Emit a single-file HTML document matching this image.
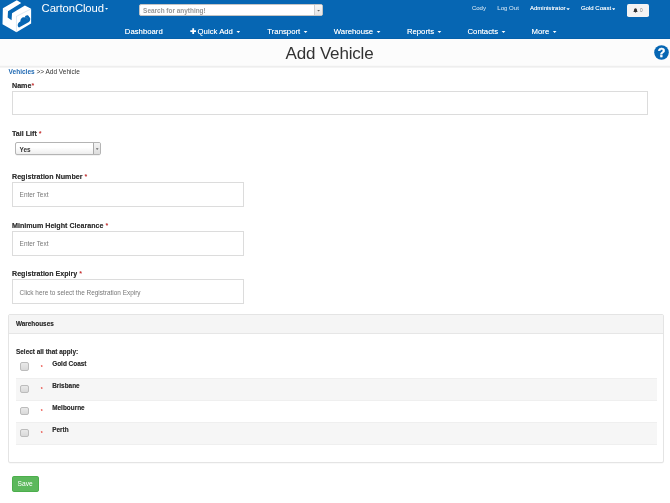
<!DOCTYPE html>
<html><head><meta charset="utf-8"><title>Add Vehicle</title>
<style>
*{box-sizing:border-box;margin:0;padding:0}
html,body{width:670px;height:503px;overflow:hidden;background:#fff;font-family:"Liberation Sans",sans-serif;color:#333}
.abs{position:absolute}
div{line-height:normal}
#hdr{position:absolute;left:0;top:0;width:670px;height:39px;background:#0666b3;box-shadow:inset 0 -1px 0 #0560aa}
#hdr .t{position:absolute;color:#fff;white-space:nowrap}
.brand{left:41.6px;top:2.1px;font-size:11.3px;letter-spacing:-0.1px}
.nav{font-size:7.75px;top:26.9px}
.top{font-size:6.05px;top:4.7px}
.caret{display:inline-block;width:4.2px;height:2.1px;background:#fff;clip-path:polygon(0 0,100% 0,50% 100%);vertical-align:middle;margin-left:3.3px}
.top .caret{width:3.5px;height:1.9px;margin-left:0.8px;vertical-align:-0.5px}
#search{position:absolute;left:138.5px;top:4.1px;width:184.8px;height:12.3px;background:#fff;border:0.6px solid #c4c4c4;border-radius:2px;overflow:hidden}
#search span{position:absolute;left:3.6px;top:1.8px;font-size:6.45px;font-weight:bold;color:#979797;white-space:nowrap}
#search .dd{position:absolute;right:0;top:0;width:8.4px;height:11px;background:linear-gradient(#f6f6f6,#e4e4e4);border-left:0.6px solid #cfcfcf}
.dd:after{content:"";position:absolute;left:2.3px;top:4.8px;width:2.8px;height:1.7px;background:#666;clip-path:polygon(0 0,100% 0,50% 100%)}
#title{position:absolute;left:285.6px;top:43.8px;font-size:17px;letter-spacing:-0.17px;color:#333;white-space:nowrap}
#tline{position:absolute;left:0;top:65px;width:670px;height:3px;background:linear-gradient(#f9f9f9 0,#f9f9f9 33%,#eeeeee 33%,#eeeeee 67%,#f4f4f4 67%)}
.lbl{position:absolute;left:12px;font-size:7.13px;font-weight:bold;color:#333;white-space:nowrap}
.lbl i{color:#e02020;font-style:normal;font-weight:normal}
.inp{position:absolute;left:11.5px;border:0.7px solid #dcdcdc;background:#fff}
.inp span{position:absolute;left:7.1px;font-size:6.45px;color:#777;white-space:nowrap}
.row{position:absolute;left:16px;width:640.5px;height:22.25px}
.row .cb{position:absolute;left:4.4px;top:6.5px;width:8.2px;height:8.4px;border:0.7px solid #bcbcbc;border-radius:2px;background:linear-gradient(#e9e9e9,#d9d9d9)}
.row .st{position:absolute;left:24.8px;top:9px;font-size:5px;color:#e8433a;line-height:4px;font-weight:bold}
.row .nm{position:absolute;left:36.2px;top:3.8px;font-size:6.43px;font-weight:bold;color:#333;white-space:nowrap}
.alt{background:#f6f6f6}
.ln{position:absolute;left:16px;width:640.5px;height:1px;background:#efefef}
.lbl,.row .nm,.bd{text-shadow:0 0 0.45px rgba(40,40,40,.55)}
.top,.nav{text-shadow:0 0 0.4px rgba(255,255,255,.6)}
#wrap{position:absolute;left:0;top:0;width:670px;height:503px;will-change:transform}
</style></head><body><div id="wrap">
<div id="hdr">
 <svg class="abs" style="left:0;top:0" width="40" height="36" viewBox="0 0 559 503">
  <path d="M235 5 L297 42 L112 157 L107 245 L162 283 L168 186 L348 78 L435 122 L435 330 L230 450 L35 340 L40 115 Z" fill="#fff"/>
  <path d="M230 228 L435 124 M230 228 L230 450" stroke="#0666b3" stroke-width="5" fill="none" opacity="0.4"/>
  <path d="M266 386 C236 372 246 314 284 302 C282 254 322 230 346 246 C352 208 398 200 408 238 C432 252 424 296 404 306 Z" fill="#0666b3"/>
  <path d="M352 246 C366 240 380 252 382 270" stroke="#fff" stroke-width="5" fill="none" opacity="0.4"/>
  <path d="M48 118 L110 155" stroke="#0666b3" stroke-width="4" fill="none" opacity="0.3"/>
 </svg>
 <div class="t brand">CartonCloud<span class="caret" style="margin-left:1.2px;width:3px;height:1.7px;vertical-align:2.4px"></span></div>
 <div id="search"><span>Search for anything!</span><div class="dd"></div></div>
 <div class="t top" style="left:471.9px;opacity:.72">Cody</div>
 <div class="t top" style="left:497.3px;opacity:.72">Log Out</div>
 <div class="t top" style="left:529.9px">Administrator<span class="caret"></span></div>
 <div class="t top" style="left:580.9px">Gold Coast<span class="caret"></span></div>
 <div class="abs" style="left:626.9px;top:4.1px;width:22.2px;height:12.7px;background:#f3f3f3;border-radius:1.8px"></div>
 <svg class="abs" style="left:632.5px;top:8px" width="5" height="5" viewBox="0 0 10 10"><path d="M5 0.5 C7.2 0.5 8 2.5 8 4.5 C8 6.2 8.6 7 9.5 7.8 L0.5 7.8 C1.4 7 2 6.2 2 4.5 C2 2.5 2.8 0.5 5 0.5 Z M3.8 8.4 L6.2 8.4 C6.2 9.2 5.7 9.7 5 9.7 C4.3 9.7 3.8 9.2 3.8 8.4 Z" fill="#333"/></svg>
 <div class="abs" style="left:640px;top:7.8px;font-size:4.7px;color:#7c7c7c">0</div>
 <div class="t nav" style="left:124.8px">Dashboard</div>
 <svg class="abs" style="left:189.6px;top:28.3px" width="6.4" height="6.4" viewBox="0 0 10 10"><path d="M3.6 0.5 H6.4 V3.6 H9.5 V6.4 H6.4 V9.5 H3.6 V6.4 H0.5 V3.6 H3.6 Z" fill="#fff"/></svg>
 <div class="t nav" style="left:197.6px">Quick Add<span class="caret"></span></div>
 <div class="t nav" style="left:267.3px">Transport<span class="caret"></span></div>
 <div class="t nav" style="left:333.8px">Warehouse<span class="caret"></span></div>
 <div class="t nav" style="left:406.9px">Reports<span class="caret"></span></div>
 <div class="t nav" style="left:467.5px">Contacts<span class="caret"></span></div>
 <div class="t nav" style="left:531.6px">More<span class="caret"></span></div>
</div>
<div class="abs" style="left:0;top:39px;width:670px;height:26px;background:#fcfcfc"></div>
<div id="title">Add Vehicle</div>
<div id="tline"></div>
<svg class="abs" style="left:654.1px;top:45px" width="15" height="15" viewBox="0 0 15 15"><circle cx="7.5" cy="7.5" r="7.3" fill="#0666b3"/><text x="7.5" y="12.2" font-family="Liberation Sans, sans-serif" font-weight="bold" font-size="12.5" fill="#fff" stroke="#fff" stroke-width="0.35" text-anchor="middle">?</text></svg>

<div class="abs" style="left:8.6px;top:68.3px;font-size:6.5px;color:#333;white-space:nowrap"><b style="color:#1f69b3">Vehicles</b> &gt;&gt; Add Vehicle</div>

<div class="lbl" style="top:81.5px">Name<i>*</i></div>
<div class="inp" style="top:91px;width:636.5px;height:24px"></div>

<div class="lbl" style="top:129.8px">Tail Lift <i>*</i></div>
<div class="abs" style="left:15px;top:142.4px;width:86px;height:12.2px;border:0.7px solid #b4b4b4;border-radius:2px;background:linear-gradient(#fff 40%,#eee);overflow:hidden;box-shadow:0 0.5px 0.5px rgba(0,0,0,.1)"><span class="abs" style="left:3.6px;top:2.2px;font-size:6.45px;font-weight:bold;color:#333">Yes</span><div class="dd abs" style="right:0;top:0;width:7.5px;height:11px;background:linear-gradient(#f4f4f4,#ddd);border-left:0.7px solid #aaa"></div></div>

<div class="lbl" style="top:172.7px">Registration Number <i>*</i></div>
<div class="inp" style="top:182.2px;width:232px;height:25px"><span style="top:7.9px">Enter Text</span></div>

<div class="lbl" style="top:221.6px">Minimum Height Clearance <i>*</i></div>
<div class="inp" style="top:231.2px;width:232px;height:25px"><span style="top:7.9px">Enter Text</span></div>

<div class="lbl" style="top:269.5px">Registration Expiry <i>*</i></div>
<div class="inp" style="top:279.3px;width:232px;height:25px"><span style="top:8.4px">Click here to select the Registration Expiry</span></div>

<div class="abs" style="left:8.4px;top:314.2px;width:655.8px;height:149.2px;border:0.7px solid #e4e4e4;border-radius:2px;background:#fff;box-shadow:0 0.5px 0.5px rgba(0,0,0,.05)"></div>
<div class="abs" style="left:9.1px;top:314.9px;width:654.4px;height:19.4px;background:#f5f5f5;border-bottom:0.7px solid #e6e6e6"><span class="abs bd" style="left:6.9px;top:5.1px;font-size:6.4px;font-weight:bold;color:#333">Warehouses</span></div>
<div class="abs bd" style="left:16px;top:347.7px;font-size:6.43px;font-weight:bold;color:#333;white-space:nowrap">Select all that apply:</div>

<div class="row" style="top:355.8px"><div class="cb"></div><div class="st">*</div><div class="nm">Gold Coast</div></div>
<div class="row alt" style="top:378px"><div class="cb"></div><div class="st">*</div><div class="nm">Brisbane</div></div>
<div class="row" style="top:400.3px"><div class="cb"></div><div class="st">*</div><div class="nm">Melbourne</div></div>
<div class="row alt" style="top:422.4px"><div class="cb"></div><div class="st">*</div><div class="nm">Perth</div></div>

<div class="ln" style="top:377.6px"></div><div class="ln" style="top:400px"></div><div class="ln" style="top:422px"></div><div class="ln" style="top:444.2px"></div>
<div class="abs" style="left:12px;top:475.6px;width:26.9px;height:16px;background:#5cb85c;border:0.6px solid #4cae4c;border-radius:1.8px"></div>
<div class="abs" style="left:17.6px;top:479.6px;font-size:6.6px;color:#fff">Save</div>
</div></body></html>
